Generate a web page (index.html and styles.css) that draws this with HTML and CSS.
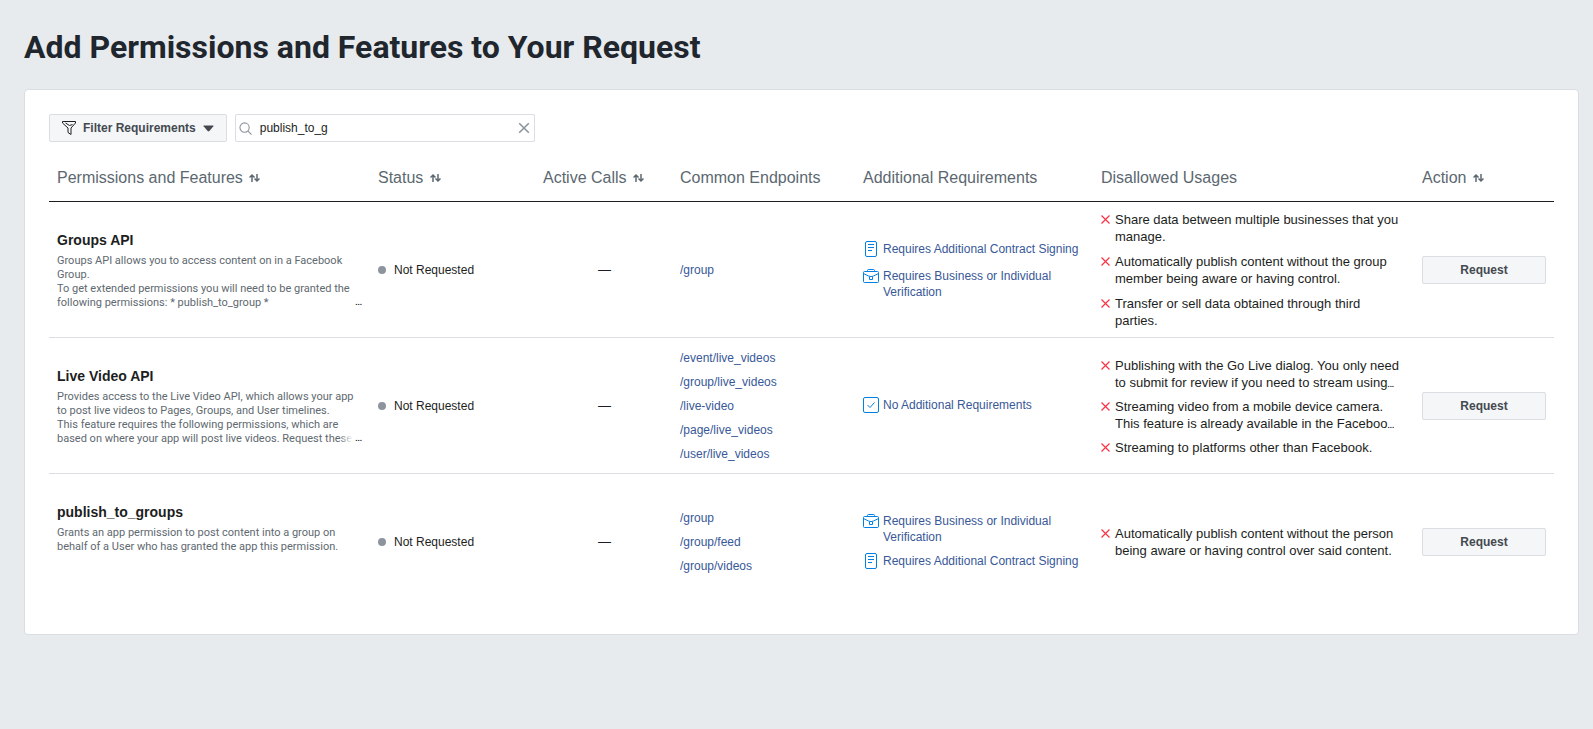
FILE: index.html
```html
<!DOCTYPE html>
<html lang="en">
<head>
<meta charset="utf-8">
<title>Add Permissions and Features to Your Request</title>
<link rel="stylesheet" href="styles.css">
</head>
<body>
<svg class="sprite" aria-hidden="true">
  <symbol id="sort" viewBox="0 0 11 10"><path d="M3 9V2M.5 4.500 3 2 5.500 4.500M8 1v7M5.500 5.500 8 8 10.500 5.500" fill="none" stroke="currentColor" stroke-width="1.500"/></symbol>
  <symbol id="contract" viewBox="0 0 16 16"><rect x="2.500" y=".5" width="11" height="15" rx="1.500"/><path d="M5 3.500h6M5 6.500h6M5 9.500h4"/></symbol>
  <symbol id="briefcase" viewBox="0 0 16 16"><rect x=".5" y="3.500" width="15" height="11" rx="1"/><path d="M4.500 3.500V2.500a1 1 0 0 1 1-1h5a1 1 0 0 1 1 1v1M.5 5.500l5 2.500h1M15.500 5.500l-5 2.500h-1M6.500 8.500h3v3h-3z"/></symbol>
  <symbol id="check" viewBox="0 0 16 16"><rect x=".5" y=".5" width="15" height="15" rx="1.500"/><path d="M4.500 8 7 10.500 11.500 5.500"/></symbol>
  <symbol id="cross" viewBox="0 0 9 9"><path d="M.5.5l8 8M8.500.5l-8 8"/></symbol>
</svg>
<main class="page">
  <h1 class="title">Add Permissions and Features to Your Request</h1>
  <section class="card">
    <div class="toolbar">
      <button class="button filter" type="button">
        <svg class="funnel" viewBox="0 0 14 14" aria-hidden="true"><path d="M.5.500h13v1.500L9 7v6.500L6 11.500V7L.5 2zM3.500 2l4 2.500L10.500 3.500"/></svg>
        <span>Filter Requirements</span>
        <svg class="caret" viewBox="0 0 11 7" aria-hidden="true"><path d="M1 .5h9q1 0 .4.800L6.400 6q-.9.900-1.800 0L.6 1.300Q0 .5 1 .5z"/></svg>
      </button>
      <div class="search">
        <svg class="search-icon" viewBox="0 0 14 14" aria-hidden="true"><circle cx="6" cy="6" r="5"/><path d="M9.500 9.500 13.500 13.500"/></svg>
        <input class="search-input" type="text" aria-label="Search" value="publish_to_g">
        <button class="clear" type="button" aria-label="Clear search"><svg viewBox="0 0 10 10"><path d="M1 1l8 8M9 1 1 9"/></svg></button>
      </div>
    </div>
    <table class="table">
      <colgroup>
        <col class="col-name"><col class="col-status"><col class="col-calls"><col class="col-endpoints"><col class="col-reqs"><col class="col-usages"><col class="col-action">
      </colgroup>
      <thead>
        <tr>
          <th scope="col">Permissions and Features <svg class="sort"><use href="#sort"/></svg></th>
          <th scope="col">Status <svg class="sort"><use href="#sort"/></svg></th>
          <th scope="col">Active Calls <svg class="sort"><use href="#sort"/></svg></th>
          <th scope="col">Common Endpoints</th>
          <th scope="col">Additional Requirements</th>
          <th scope="col">Disallowed Usages</th>
          <th scope="col">Action <svg class="sort"><use href="#sort"/></svg></th>
        </tr>
      </thead>
      <tbody>
        <tr>
          <td><div class="feature">
            <h2 class="name">Groups API</h2>
            <div class="description">Groups API allows you to access content on in a Facebook Group.<br>To get extended permissions you will need to be granted the following permissions: * publish_to_group *<span class="more">...</span></div>
          </div></td>
          <td><span class="status">Not Requested</span></td>
          <td class="calls">—</td>
          <td><ul class="list"><li><a href="#">/group</a></li></ul></td>
          <td><ul class="list reqs">
            <li class="req"><svg class="icon"><use href="#contract"/></svg><a href="#">Requires Additional Contract Signing</a></li>
            <li class="req"><svg class="icon"><use href="#briefcase"/></svg><a href="#">Requires Business or Individual Verification</a></li>
          </ul></td>
          <td><ul class="list">
            <li class="usage"><svg class="cross"><use href="#cross"/></svg><span>Share data between multiple businesses that you manage.</span></li>
            <li class="usage"><svg class="cross"><use href="#cross"/></svg><span>Automatically publish content without the group member being aware or having control.</span></li>
            <li class="usage"><svg class="cross"><use href="#cross"/></svg><span>Transfer or sell data obtained through third parties.</span></li>
          </ul></td>
          <td><button class="button request" type="button">Request</button></td>
        </tr>
        <tr>
          <td><div class="feature">
            <h2 class="name">Live Video API</h2>
            <div class="description">Provides access to the Live Video API, which allows your app to post live videos to Pages, Groups, and User timelines.<br>This feature requires the following permissions, which are based on where your app will post live videos. Request these<span class="more">...</span></div>
          </div></td>
          <td><span class="status">Not Requested</span></td>
          <td class="calls">—</td>
          <td><ul class="list">
            <li><a href="#">/event/live_videos</a></li>
            <li><a href="#">/group/live_videos</a></li>
            <li><a href="#">/live-video</a></li>
            <li><a href="#">/page/live_videos</a></li>
            <li><a href="#">/user/live_videos</a></li>
          </ul></td>
          <td><ul class="list reqs">
            <li class="req"><svg class="icon"><use href="#check"/></svg><a href="#">No Additional Requirements</a></li>
          </ul></td>
          <td><ul class="list compact">
            <li class="usage"><svg class="cross"><use href="#cross"/></svg><span>Publishing with the Go Live dialog. You only need to submit for review if you need to stream using<small>...</small></span></li>
            <li class="usage"><svg class="cross"><use href="#cross"/></svg><span>Streaming video from a mobile device camera. This feature is already available in the Faceboo<small>...</small></span></li>
            <li class="usage"><svg class="cross"><use href="#cross"/></svg><span>Streaming to platforms other than Facebook.</span></li>
          </ul></td>
          <td><button class="button request" type="button">Request</button></td>
        </tr>
        <tr>
          <td><div class="feature">
            <h2 class="name">publish_to_groups</h2>
            <div class="description">Grants an app permission to post content into a group on behalf of a User who has granted the app this permission.</div>
          </div></td>
          <td><span class="status">Not Requested</span></td>
          <td class="calls">—</td>
          <td><ul class="list">
            <li><a href="#">/group</a></li>
            <li><a href="#">/group/feed</a></li>
            <li><a href="#">/group/videos</a></li>
          </ul></td>
          <td><ul class="list reqs">
            <li class="req"><svg class="icon"><use href="#briefcase"/></svg><a href="#">Requires Business or Individual Verification</a></li>
            <li class="req"><svg class="icon"><use href="#contract"/></svg><a href="#">Requires Additional Contract Signing</a></li>
          </ul></td>
          <td><ul class="list">
            <li class="usage"><svg class="cross"><use href="#cross"/></svg><span>Automatically publish content without the person being aware or having control over said content.</span></li>
          </ul></td>
          <td><button class="button request" type="button">Request</button></td>
        </tr>
      </tbody>
    </table>
  </section>
</main>
</body>
</html>
```
FILE: styles.css
```css
* { box-sizing: border-box; }
body {
  margin: 0;
  background: #e7ebee;
  color: #1c1e21;
  font: 12px/16px "Liberation Sans", Arial, sans-serif;
}
.sprite { display: none; }
.page { padding: 28px 14px 28px 24px; }
.title {
  margin: 0 0 23px;
  color: #1f262d;
  font: bold 32px/38px Roboto, sans-serif;
}
.card {
  padding: 24px;
  background: #fff;
  border: 1px solid #dadde1;
  border-radius: 4px;
}
.toolbar { display: flex; gap: 8px; }
.button {
  height: 28px;
  padding: 0 12px;
  border: 1px solid #dadde1;
  border-radius: 2px;
  background: #f5f6f7;
  color: #444950;
  font: bold 12px/16px "Liberation Sans", Arial, sans-serif;
}
.filter { display: flex; align-items: center; gap: 7px; padding: 0 12px; }
.filter span { white-space: nowrap; }
.funnel { width: 14px; height: 14px; fill: none; stroke: #1c1e21; }
.caret { width: 11px; height: 7px; fill: #444950; }
.search {
  display: flex;
  align-items: center;
  width: 300px;
  height: 28px;
  padding: 0 4px 0 3px;
  border: 1px solid #dadde1;
  border-radius: 2px;
}
.search-icon { width: 13px; height: 13px; fill: none; stroke: #8d949e; stroke-width: 1.200; }
.search-input {
  flex: 1;
  min-width: 0;
  height: 26px;
  padding: 0 8px;
  border: 0;
  outline: 0;
  background: none;
  color: #1c1e21;
  font: 12px/16px "Liberation Sans", Arial, sans-serif;
}
.clear { display: flex; padding: 1px 0; border: 0; background: none; }
.clear svg { width: 12px; height: 12px; fill: none; stroke: #8d949e; stroke-width: 1.300; }
.table {
  width: 100%;
  border-collapse: separate;
  border-spacing: 0;
  table-layout: fixed;
}
.col-name, .col-usages { width: 321px; }
.col-status { width: 165px; }
.col-calls { width: 137px; }
.col-endpoints { width: 183px; }
.col-reqs { width: 238px; }
.col-action { width: 140px; }
.table th {
  height: 60px;
  padding: 12px 8px 0;
  border-bottom: 1px solid #1c1e21;
  color: #5c6870;
  font-size: 16px;
  font-weight: normal;
  text-align: left;
  vertical-align: middle;
  line-height: 20px;
  white-space: nowrap;
}
.table td { height: 136px; padding: 0 8px; border-bottom: 1px solid #dadde1; }
.table tbody tr:last-child td { border-bottom-color: transparent; }
.sort { width: 11px; height: 10px; margin-left: 2px; }
.feature { height: 80px; }
.name { margin: 0 0 4px; font-size: 14px; line-height: 20px; }
.description {
  position: relative;
  padding-right: 8px;
  color: #606970;
  font: 11px/14px Roboto, sans-serif;
}
.more {
  position: absolute;
  right: 0;
  bottom: 0;
  padding-left: 16px;
  background: linear-gradient(to right, transparent, #fff 14px);
  color: #1c1e21;
  font: bold 8px/14px "Liberation Sans", Arial, sans-serif;
}
.status { display: flex; align-items: center; gap: 8px; }
.status::before { content: ""; width: 8px; height: 8px; border-radius: 50%; background: #8d949e; }
.table .calls { padding-left: 10px; text-align: center; font-size: 13px; }
.list { display: grid; gap: 8px; margin: 0; padding: 0; list-style: none; }
.list.compact { gap: 7px; padding-top: 2px; }
.list.reqs { padding-top: 2px; }
.list a { color: #385898; text-decoration: none; }
.req { display: flex; align-items: flex-start; gap: 4px; min-height: 19px; }
.icon { flex: none; width: 16px; height: 16px; fill: none; stroke: #0080e0; }
.usage { display: flex; gap: 5px; font-size: 13px; line-height: 17px; }
.usage small { font-size: 8px; font-weight: bold; line-height: 8px; }
.cross { flex: none; width: 9px; height: 9px; margin-top: 4px; fill: none; stroke: #fa3246; stroke-width: 1.200; }
.request { display: block; width: 100%; }
```
